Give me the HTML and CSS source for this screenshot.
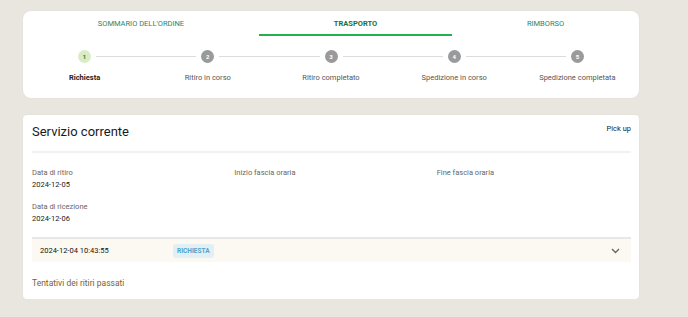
FILE: index.html
```html
<!DOCTYPE html>
<html lang="it">
<head>
    <meta charset="UTF-8">
    <meta name="viewport" content="width=device-width, initial-scale=1.0">
    <title>Trasporto</title>
    <link rel="stylesheet" href="styles.css">
</head>
<body>
    <div class="container">
        <div class="card steps-card">
            <div class="tabs">
                <div class="tab">SOMMARIO DELL'ORDINE</div>
                <div class="tab active">TRASPORTO</div>
                <div class="tab">RIMBORSO</div>
            </div>
            <div class="stepper">
                <div class="step done">
                    <div class="step-top"><span class="line hidden"></span><span class="dot">1</span><span class="line"></span></div>
                    <div class="step-label">Richiesta</div>
                </div>
                <div class="step">
                    <div class="step-top"><span class="line"></span><span class="dot">2</span><span class="line"></span></div>
                    <div class="step-label">Ritiro in corso</div>
                </div>
                <div class="step">
                    <div class="step-top"><span class="line"></span><span class="dot">3</span><span class="line"></span></div>
                    <div class="step-label">Ritiro completato</div>
                </div>
                <div class="step">
                    <div class="step-top"><span class="line"></span><span class="dot">4</span><span class="line"></span></div>
                    <div class="step-label">Spedizione in corso</div>
                </div>
                <div class="step">
                    <div class="step-top"><span class="line"></span><span class="dot">5</span><span class="line hidden"></span></div>
                    <div class="step-label">Spedizione completata</div>
                </div>
            </div>
        </div>

        <div class="card service-card">
            <div class="service-header">
                <h2>Servizio corrente</h2>
                <span class="service-type">Pick up</span>
            </div>
            <div class="fields">
                <div class="field">
                    <div class="field-label">Data di ritiro</div>
                    <div class="field-value">2024-12-05</div>
                </div>
                <div class="field">
                    <div class="field-label">Inizio fascia oraria</div>
                </div>
                <div class="field">
                    <div class="field-label">Fine fascia oraria</div>
                </div>
                <div class="field">
                    <div class="field-label">Data di ricezione</div>
                    <div class="field-value">2024-12-06</div>
                </div>
            </div>
            <div class="history-row">
                <span class="history-date">2024-12-04 10:43:55</span>
                <span class="badge">RICHIESTA</span>
                <svg class="chevron" width="9" height="6" viewBox="0 0 9 6">
                    <path d="M1 1 L4.5 4.5 L8 1" fill="none" stroke="#666" stroke-width="1.4"/>
                </svg>
            </div>
            <div class="past-title">Tentativi dei ritiri passati</div>
        </div>
    </div>
</body>
</html>
```

FILE: styles.css
```css
body {
    margin: 0;
    background-color: #e9e6e0;
    font-family: Roboto, "Liberation Sans", sans-serif;
    color: #333;
}
.container {
    width: 616px;
    padding: 11px 0 0 23px;
}
.card {
    background-color: #fff;
    border-radius: 8px;
    box-shadow: 0 0 2px rgba(0, 0, 0, 0.06);
}
.steps-card {
    padding-bottom: 13px;
}
.tabs {
    display: flex;
}
.tab {
    flex: 1 1 auto;
    text-align: center;
    font-size: 7.5px;
    line-height: 13px;
    padding: 6px 0 4px;
    border-bottom: 2px solid transparent;
    color: #23876a;
}
.tab.active {
    font-weight: bold;
    color: #14703f;
    border-bottom-color: #22b04e;
}
.stepper {
    display: grid;
    grid-template-columns: repeat(5, 1fr);
    margin-top: 14px;
}
.step-top {
    display: flex;
    align-items: center;
}
.line {
    flex: 1;
    height: 1px;
    background-color: #dcdcdc;
}
.line.hidden {
    visibility: hidden;
}
.dot {
    width: 13px;
    height: 13px;
    margin: 0 5px;
    border-radius: 50%;
    background-color: #9a9a9a;
    color: #fff;
    font-size: 6px;
    line-height: 13px;
    text-align: center;
    font-weight: bold;
}
.step.done .dot {
    background-color: #d8ecc6;
    color: #4d6b32;
}
.step-label {
    margin-top: 8px;
    text-align: center;
    font-size: 7.5px;
    line-height: 14px;
    color: #555;
}
.step.done .step-label {
    font-weight: bold;
    color: #222;
}
.service-card {
    margin-top: 17px;
    border-radius: 4px;
    padding: 7px 8px 9px 9px;
}
.service-header {
    display: flex;
    justify-content: space-between;
    align-items: flex-start;
    padding-bottom: 9px;
    border-bottom: 2px solid #f1f1f1;
}
.service-header h2 {
    margin: 0;
    font-size: 13px;
    font-weight: normal;
    line-height: 20px;
    color: #1a1a1a;
}
.service-type {
    font-size: 7.5px;
    line-height: 14px;
    color: #222;
}
.fields {
    display: grid;
    grid-template-columns: repeat(3, 1fr);
    column-gap: 8px;
    row-gap: 10px;
    padding-top: 14px;
    padding-bottom: 12px;
}
.field-label {
    font-size: 7.5px;
    line-height: 12px;
    color: #666;
}
.field-value {
    font-size: 7.5px;
    line-height: 12px;
    color: #222;
}
.history-row {
    display: flex;
    align-items: center;
    height: 23px;
    padding: 0 11px 0 8px;
    border-top: 2px solid #e9e7e3;
    background-color: #fcf9f2;
}
.history-date {
    width: 133px;
    font-size: 7.5px;
    color: #111;
}
.badge {
    padding: 3px 4px;
    border-radius: 3px;
    background-color: #e2eff4;
    color: #4fa3cc;
    font-size: 6.5px;
    font-weight: bold;
}
.chevron {
    margin-left: auto;
}
.past-title {
    margin-top: 14px;
    font-size: 8.5px;
    line-height: 14px;
    color: #7d5e33;
}
```
